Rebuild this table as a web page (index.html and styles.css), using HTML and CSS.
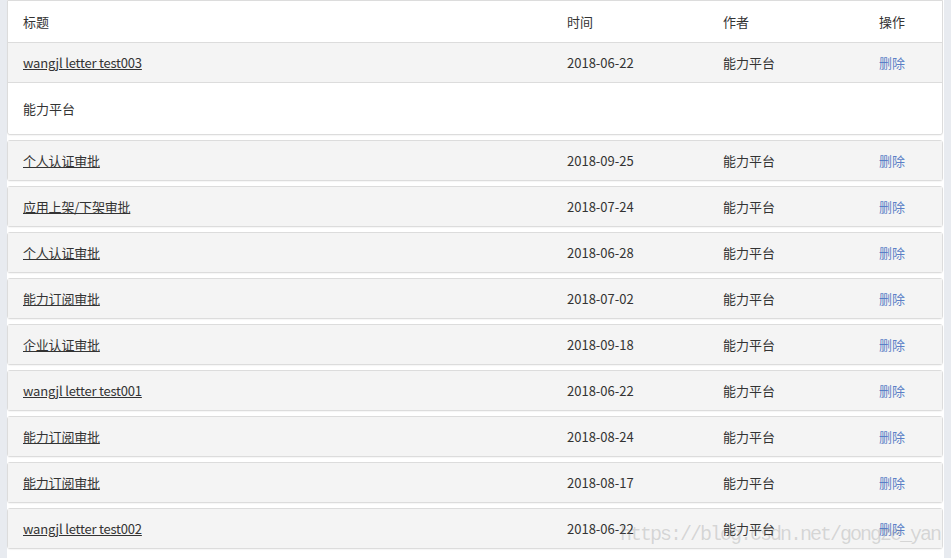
FILE: index.html
```html
<!DOCTYPE html>
<html lang="zh-CN">
<head>
<meta charset="utf-8">
<title>消息列表</title>
<link rel="stylesheet" href="styles.css">
</head>
<body>
<div class="wrap">
  <div class="card first">
    <div class="row head">
      <div class="c-title">标题</div>
      <div class="c-time">时间</div>
      <div class="c-author">作者</div>
      <div class="c-op">操作</div>
    </div>
    <div class="row item">
      <div class="c-title"><a href="#">wangjl letter test003</a></div>
      <div class="c-time">2018-06-22</div>
      <div class="c-author">能力平台</div>
      <div class="c-op"><a class="del" href="#">删除</a></div>
    </div>
    <div class="detail">能力平台</div>
  </div>

  <div class="card"><div class="row item">
    <div class="c-title"><a href="#">个人认证审批</a></div>
    <div class="c-time">2018-09-25</div>
    <div class="c-author">能力平台</div>
    <div class="c-op"><a class="del" href="#">删除</a></div>
  </div></div>

  <div class="card"><div class="row item">
    <div class="c-title"><a href="#">应用上架/下架审批</a></div>
    <div class="c-time">2018-07-24</div>
    <div class="c-author">能力平台</div>
    <div class="c-op"><a class="del" href="#">删除</a></div>
  </div></div>

  <div class="card"><div class="row item">
    <div class="c-title"><a href="#">个人认证审批</a></div>
    <div class="c-time">2018-06-28</div>
    <div class="c-author">能力平台</div>
    <div class="c-op"><a class="del" href="#">删除</a></div>
  </div></div>

  <div class="card"><div class="row item">
    <div class="c-title"><a href="#">能力订阅审批</a></div>
    <div class="c-time">2018-07-02</div>
    <div class="c-author">能力平台</div>
    <div class="c-op"><a class="del" href="#">删除</a></div>
  </div></div>

  <div class="card"><div class="row item">
    <div class="c-title"><a href="#">企业认证审批</a></div>
    <div class="c-time">2018-09-18</div>
    <div class="c-author">能力平台</div>
    <div class="c-op"><a class="del" href="#">删除</a></div>
  </div></div>

  <div class="card"><div class="row item">
    <div class="c-title"><a href="#">wangjl letter test001</a></div>
    <div class="c-time">2018-06-22</div>
    <div class="c-author">能力平台</div>
    <div class="c-op"><a class="del" href="#">删除</a></div>
  </div></div>

  <div class="card"><div class="row item">
    <div class="c-title"><a href="#">能力订阅审批</a></div>
    <div class="c-time">2018-08-24</div>
    <div class="c-author">能力平台</div>
    <div class="c-op"><a class="del" href="#">删除</a></div>
  </div></div>

  <div class="card"><div class="row item">
    <div class="c-title"><a href="#">能力订阅审批</a></div>
    <div class="c-time">2018-08-17</div>
    <div class="c-author">能力平台</div>
    <div class="c-op"><a class="del" href="#">删除</a></div>
  </div></div>

  <div class="card"><div class="row item">
    <div class="c-title"><a href="#">wangjl letter test002</a></div>
    <div class="c-time">2018-06-22</div>
    <div class="c-author">能力平台</div>
    <div class="c-op"><a class="del" href="#">删除</a></div>
  </div></div>
</div>
<div class="watermark">https://blog.csdn.net/gongze_yan</div>
</body>
</html>
```
FILE: styles.css
```css
html, body {
  margin: 0;
  padding: 0;
  height: 100%;
  overflow: hidden;
}
body {
  background: #e8ebf0;
  font-family: "Noto Sans CJK SC", "Noto Sans", sans-serif;
  font-size: 13px;
  color: #333;
}
.wrap {
  margin-left: 7px;
  width: 937px;
  min-height: 100%;
  background: #fff;
}
.card {
  width: 934px;
  border: 1px solid #dcdcdc;
  border-radius: 3px;
  background: #f4f4f4;
  margin-bottom: 5px;
  box-shadow: 0 1px 1px rgba(0, 0, 0, 0.04);
}
.card.first {
  background: #fff;
  border-top-left-radius: 0;
  border-top-right-radius: 0;
}
.row {
  display: flex;
  align-items: center;
  padding-left: 15px;
}
.row.head {
  height: 41px;
  background: #fff;
  border-bottom: 1px solid #dcdcdc;
}
.row.item {
  height: 39px;
  background: #f4f4f4;
}
.first .row.item {
  border-bottom: 1px solid #dcdcdc;
}
.c-title { width: 544px; }
.c-time { width: 156px; }
.c-author { width: 156px; }
.c-op { flex: 1; }
.c-title a {
  color: #333;
  text-decoration: underline;
  letter-spacing: -0.2px;
}
.del {
  color: #5b7fc6;
  text-decoration: none;
}
.detail {
  height: 51px;
  display: flex;
  align-items: center;
  padding-left: 15px;
  background: #fff;
  border-radius: 0 0 3px 3px;
}
.watermark {
  position: absolute;
  left: 620px;
  top: 523px;
  font-family: "Liberation Mono", monospace;
  font-size: 20px;
  letter-spacing: -2px;
  color: rgba(120, 120, 120, 0.25);
  white-space: nowrap;
  pointer-events: none;
}
```
